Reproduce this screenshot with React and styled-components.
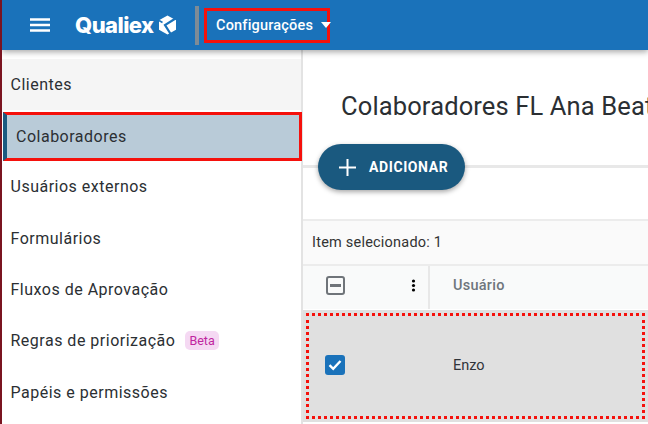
import React from 'react';
import styled, { createGlobalStyle } from 'styled-components';

const Global = createGlobalStyle`
  html, body { margin: 0; padding: 0; background: #fff; overflow: hidden; }
  body { font-family: Roboto, "Liberation Sans", sans-serif; color: #212529; }
  * { box-sizing: border-box; }
`;

const Page = styled.div`
  width: 648px; height: 424px; overflow: hidden; display: flex; flex-direction: column;
  border-left: 2px solid #7a1420; position: relative; background: #fff;
`;
const Header = styled.header`
  height: 50px; flex: none; background: #1a72ba; display: flex; align-items: center;
  padding-left: 27px; box-shadow: 0 2px 6px rgba(0,0,0,.35); position: relative; z-index: 2;
`;
const MenuIcon = styled.svg`width: 22px; height: 16px; flex: none;`;
const Logo = styled.div`display: flex; align-items: center; margin-left: 24px; gap: 4px; width: 120px;`;
const LogoText = styled.span`
  font-family: Inter, "Liberation Sans", sans-serif; font-weight: 800; font-size: 22px;
  letter-spacing: -.55px; color: #fff; line-height: 1;
`;
const Divider = styled.div`width: 4px; height: 39px; background: #7e8b96;`;
const ConfigBox = styled.div`
  margin-left: 5px; width: 126px; height: 35px; border: 3px solid #f5110c; display: flex; align-items: center;
  padding-left: 9px; color: #fff; font-weight: 500; font-size: 14.5px; letter-spacing: .2px; gap: 8px;
  white-space: nowrap;
`;
const Caret = styled.span`flex: none; width: 0; height: 0; border-left: 5.5px solid transparent; border-right: 5.5px solid transparent; border-top: 6px solid #fff;`;
const Body = styled.div`flex: 1; display: flex; min-height: 0;`;
const Sidebar = styled.nav`
  width: 301px; flex: none; padding-top: 9px; display: flex; flex-direction: column; border-right: 2px solid #e3e3e3;
`;
const NavItem = styled.div`
  height: ${p => p.$h || 51.4}px; flex: none; display: flex; align-items: center; padding-left: 8.5px; font-size: 16px;
  letter-spacing: .5px; color: #2b2f33; background: ${p => p.$muted ? '#f5f5f5' : 'transparent'};
`;
const ActiveItem = styled.div`
  height: 49px; flex: none; margin: 2px -1px 0 1px; background: #b9cbd8; border: 3px solid #f5110c; border-left: 4px solid #1b5a80;
  display: flex; align-items: center; padding-left: 9px; font-size: 16px; letter-spacing: .5px; color: #2b2f33;
`;
const Beta = styled.span`
  margin-left: 10px; height: 19px; padding: 0 4px; border-radius: 5px; background: #f5d9f3; color: #c0269f;
  font-size: 12.5px; letter-spacing: 0; display: inline-flex; align-items: center;
`;
const Main = styled.main`flex: 1; min-width: 0; display: flex; flex-direction: column; overflow: hidden;`;
const Title = styled.h1`
  margin: 0; height: 94px; flex: none; padding: 39px 0 0 38px; font-weight: 400; font-size: 25.5px; line-height: 34px;
  color: #2b2f33; white-space: nowrap; letter-spacing: .13px;
`;
const AddRow = styled.div`
  height: 75px; flex: none; padding-left: 15px; position: relative;
  &::before { content: ""; position: absolute; left: 0; right: 0; top: 21px; height: 3px; background: #e8e8e8; }
`;
const AddButton = styled.button`
  position: relative; width: 147px; height: 46px; border: 0; border-radius: 23px; background: #1a597f; color: #fff;
  display: flex; align-items: center; gap: 13px; padding: 0 0 0 21px; font: 700 14px Roboto, sans-serif; letter-spacing: .6px;
  box-shadow: 0 2px 5px rgba(0,0,0,.35);
`;
const Selected = styled.div`
  height: 47px; flex: none; background: #fafafa; border-top: 2px solid #ececec; border-bottom: 2px solid #ececec;
  display: flex; align-items: center; padding-left: 9px; font-size: 14.5px; letter-spacing: .22px; color: #333;
`;
const HeadRow = styled.div`height: 43px; flex: none; background: #f9fafa; display: flex; align-items: stretch;`;
const SelectCell = styled.div`
  width: 127px; flex: none; display: flex; align-items: center; justify-content: space-between; padding: 0 12px 4px 23px;
  border-right: 2px solid #e8e8e8;
`;
const HeadLabel = styled.div`padding: 0 0 4px 23px; display: flex; align-items: center; font-size: 14.5px; letter-spacing: .25px; font-weight: 500; color: #6e757c;`;
const Indeterminate = styled.span`
  width: 19px; height: 19px; border: 2px solid #6f7479; border-radius: 3px; display: flex; align-items: center; justify-content: center;
  &::after { content: ""; width: 11px; height: 3px; background: #6f7479; }
`;
const Dots = styled.svg`width: 5px; height: 13px;`;
const DataRow = styled.div`
  height: 112px; flex: none; margin-top: 1px; padding-bottom: 2px; background: #e0e0e0; display: flex; align-items: center;
  outline: 3px dotted #f5110c; outline-offset: -6px;
`;
const CheckBox = styled.span`
  width: 20px; height: 20px; margin-left: 22px; border-radius: 3px; background: #1a72ba; display: flex; align-items: center; justify-content: center;
`;
const Name = styled.span`margin-left: 108px; font-size: 14.5px; color: #30343a;`;

export default function App() {
  return (
    <Page>
      <Global />
      <Header>
        <MenuIcon viewBox="0 0 22 16"><path d="M1 2.5h20M1 8h20M1 13.5h20" stroke="#fff" strokeWidth="2.4" /></MenuIcon>
        <Logo>
          <LogoText>Qualiex</LogoText>
          <svg width="19" height="20" viewBox="0 0 19 20">
            <path d="M9.5 0.5 18 5.3v9.4L9.5 19.5 1 14.7V5.3Z" fill="#fff" />
            <path d="M17.5 3.5 7 10l6 9.5" fill="none" stroke="#1a72ba" strokeWidth="2.2" />
            <path d="M1 5.5 4.5 7.5" stroke="#1a72ba" strokeWidth="1.5" />
          </svg>
        </Logo>
        <Divider />
        <ConfigBox>Configurações<Caret /></ConfigBox>
      </Header>
      <Body>
        <Sidebar>
          <NavItem $muted $h={51}>Clientes</NavItem>
          <ActiveItem>Colaboradores</ActiveItem>
          <NavItem>Usuários externos</NavItem>
          <NavItem>Formulários</NavItem>
          <NavItem>Fluxos de Aprovação</NavItem>
          <NavItem>Regras de priorização<Beta>Beta</Beta></NavItem>
          <NavItem>Papéis e permissões</NavItem>
        </Sidebar>
        <Main>
          <Title>Colaboradores FL Ana Beatriz</Title>
          <AddRow>
            <AddButton>
              <svg width="17" height="17" viewBox="0 0 17 17"><path d="M8.5 0v17M0 8.5h17" stroke="#fff" strokeWidth="2" /></svg>
              ADICIONAR
            </AddButton>
          </AddRow>
          <Selected>Item selecionado: 1</Selected>
          <HeadRow>
            <SelectCell>
              <Indeterminate />
              <Dots viewBox="0 0 5 13"><circle cx="2.5" cy="2" r="1.6" /><circle cx="2.5" cy="6.5" r="1.6" /><circle cx="2.5" cy="11" r="1.6" /></Dots>
            </SelectCell>
            <HeadLabel>Usuário</HeadLabel>
          </HeadRow>
          <DataRow>
            <CheckBox>
              <svg width="14" height="12" viewBox="0 0 14 12"><path d="M1.5 6.2 5.2 9.8 12.5 2" fill="none" stroke="#fff" strokeWidth="2.4" /></svg>
            </CheckBox>
            <Name>Enzo</Name>
          </DataRow>
        </Main>
      </Body>
    </Page>
  );
}
